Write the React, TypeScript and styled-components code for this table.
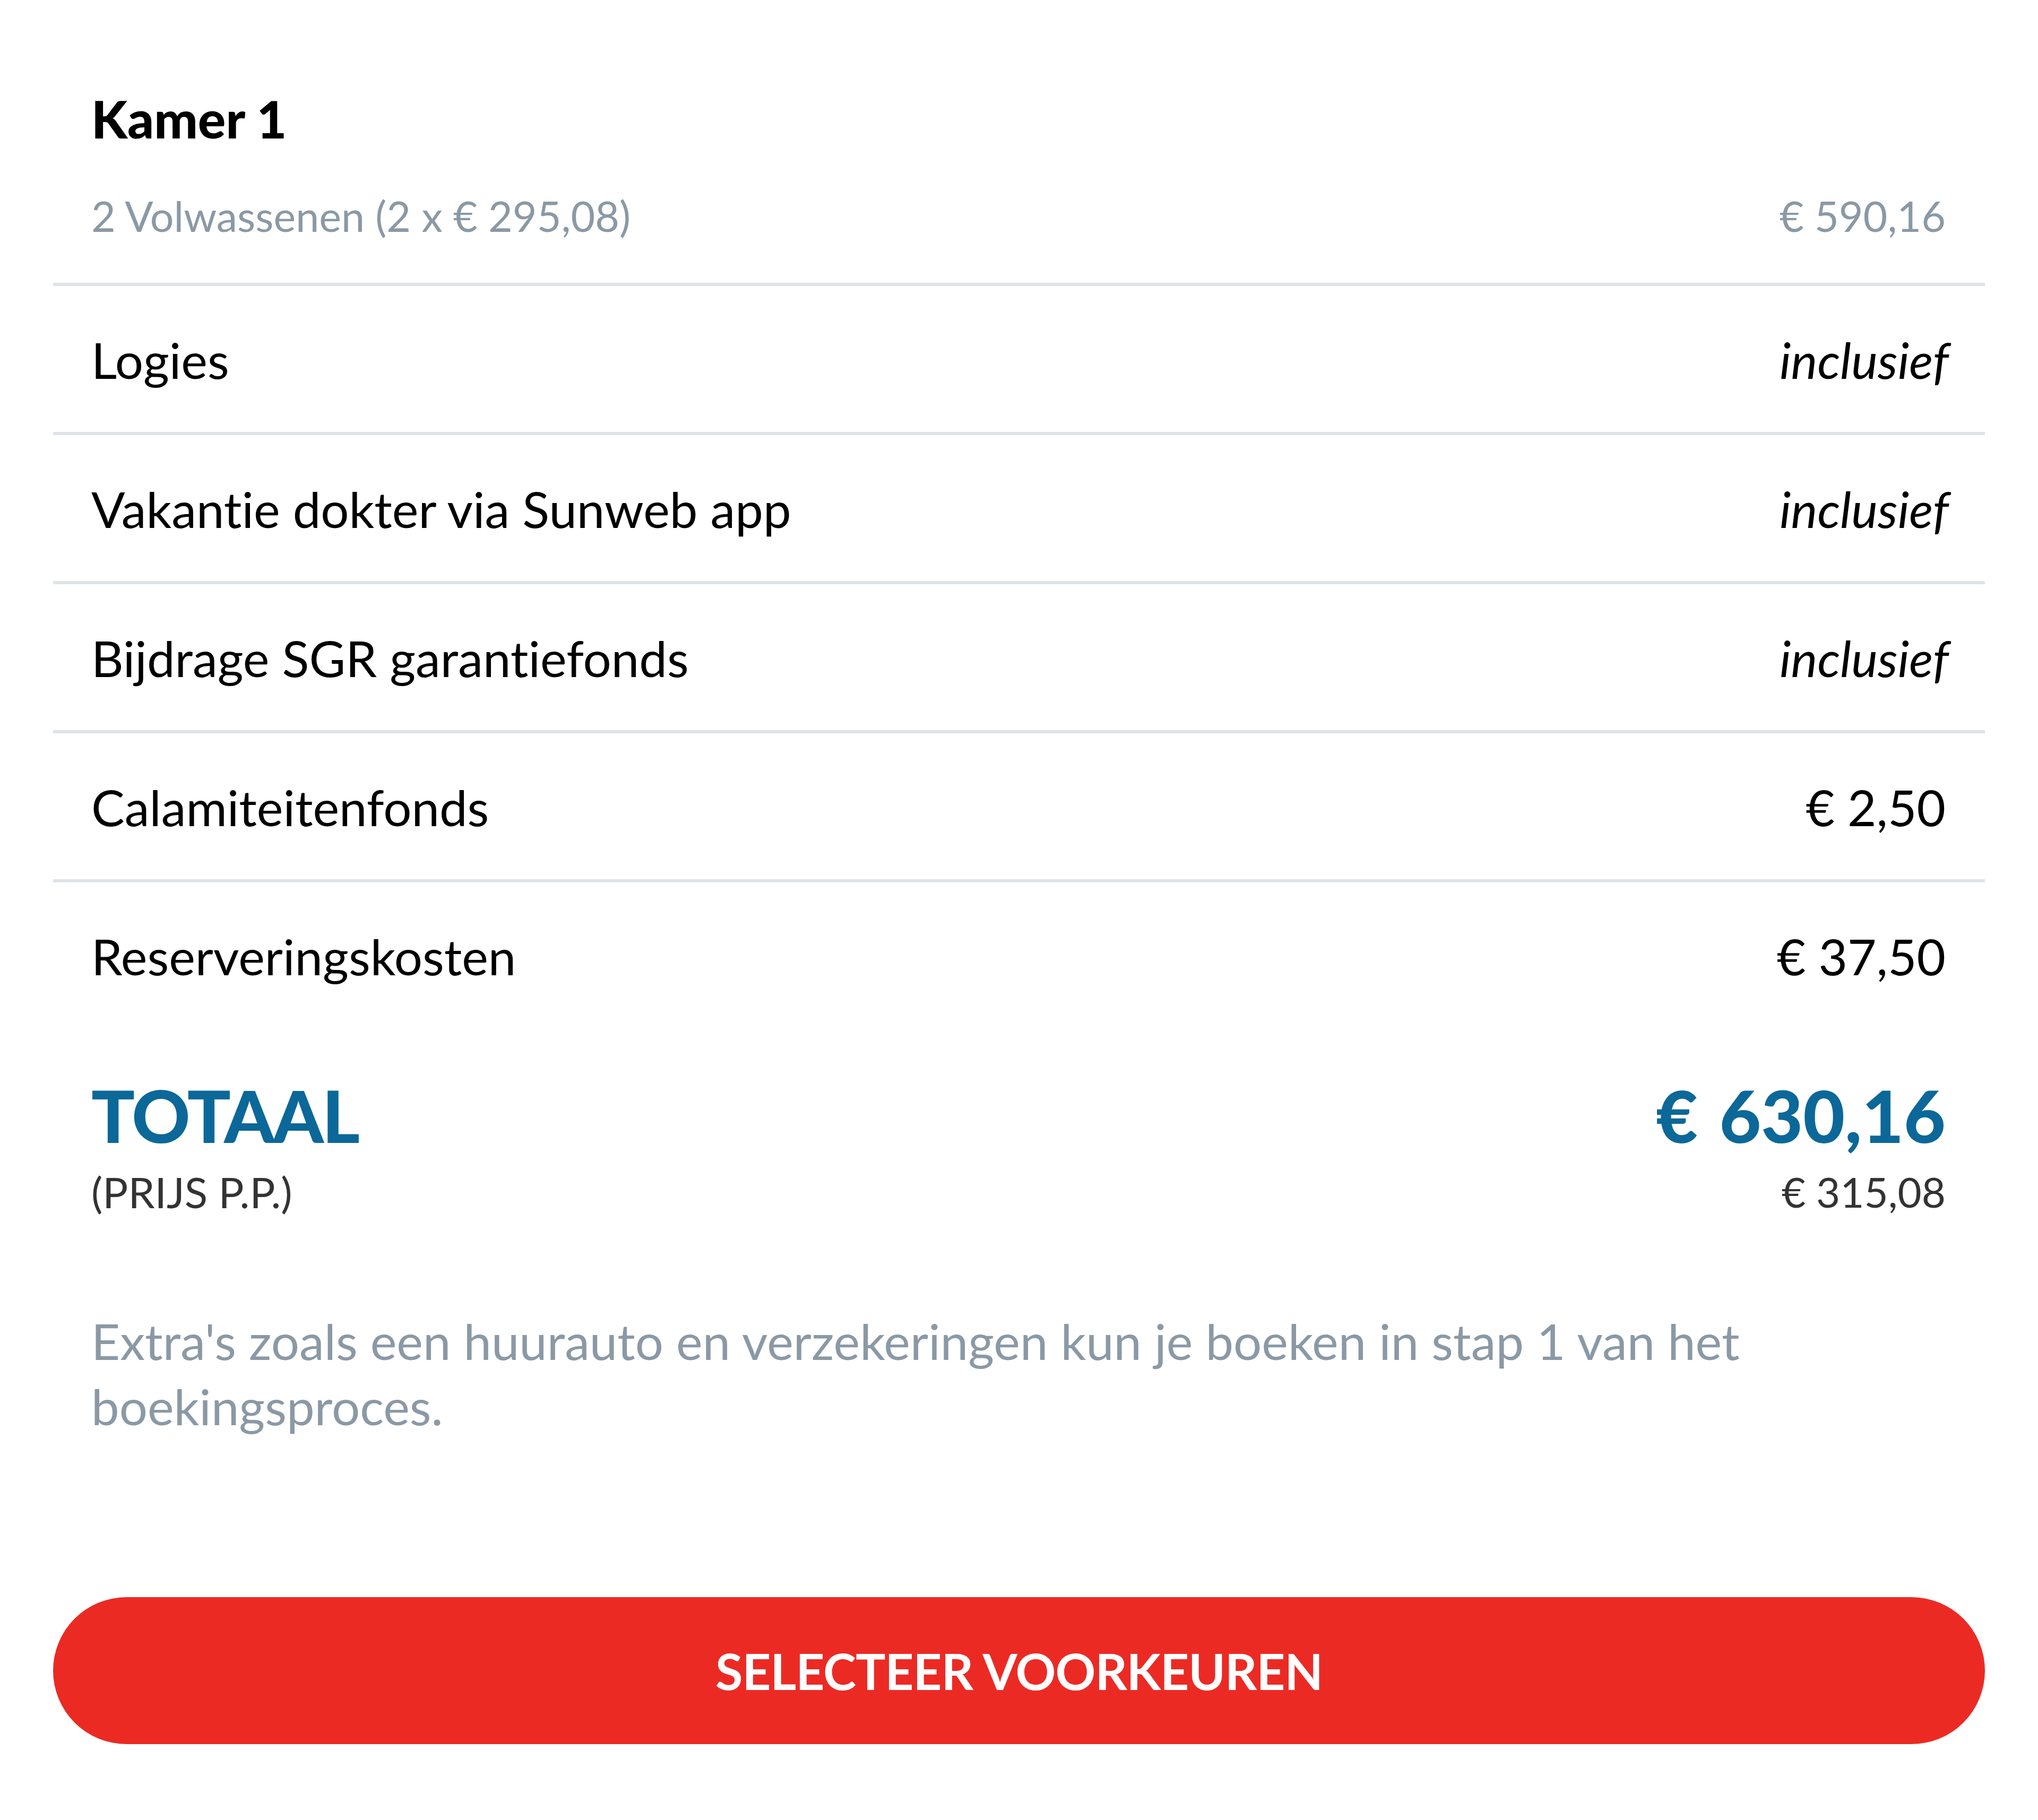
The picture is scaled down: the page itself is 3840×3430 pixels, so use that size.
import React from "react";
import styled, { createGlobalStyle } from "styled-components";

const GlobalStyle = createGlobalStyle`
  html, body {
    margin: 0;
    padding: 0;
    background: #ffffff;
  }
  body {
    font-family: "Lato", "Noto Sans", sans-serif;
    font-variant-ligatures: none;
    color: #000000;
  }
  * { box-sizing: border-box; }
`;

const Panel = styled.div`
  width: 3840px;
  min-height: 3430px;
  padding: 162px 100px 148px;
  display: flex;
  flex-direction: column;
`;

const Header = styled.div`
  display: flex;
  flex-direction: column;
  gap: 69px;
  padding: 0 74px 72px 72px;
`;

const Title = styled.h2`
  margin: 0;
  font-size: 98px;
  line-height: 122px;
  font-weight: 900;
  color: #000;
`;

const SubRow = styled.div`
  display: flex;
  justify-content: space-between;
  align-items: baseline;
  font-size: 79px;
  line-height: 108px;
  color: #8a99a5;
`;

const List = styled.div`
  display: flex;
  flex-direction: column;
`;

const Row = styled.div`
  display: flex;
  justify-content: space-between;
  align-items: baseline;
  border-top: 6px solid #dde3e7;
  padding: 78px 74px 75px 72px;
  font-size: 94px;
  line-height: 122px;
`;

const Value = styled.span<{ $italic?: boolean }>`
  font-style: ${(p) => (p.$italic ? "italic" : "normal")};
  margin-right: ${(p) => (p.$italic ? "-6px" : "0")};
`;

const Totals = styled.div`
  display: grid;
  grid-template-columns: 1fr auto;
  row-gap: 19px;
  padding: 89px 74px 0 72px;
`;

const TotalLabel = styled.div`
  font-size: 136px;
  line-height: 150px;
  font-weight: 900;
  color: #0b6898;
  letter-spacing: -3px;
`;

const TotalAmount = styled(TotalLabel)`
  text-align: right;
  letter-spacing: 0;
  word-spacing: 8px;
`;

const SmallNote = styled.div<{ $right?: boolean }>`
  font-size: ${(p) => (p.$right ? "78px" : "80px")};
  line-height: 100px;
  color: #333;
  text-align: ${(p) => (p.$right ? "right" : "left")};
`;

const Info = styled.p`
  margin: 169px 0 0;
  padding: 0 74px 0 72px;
  max-width: 3440px;
  font-size: 94px;
  line-height: 123px;
  color: #8a99a5;
`;

const CTA = styled.button`
  margin-top: 299px;
  width: 100%;
  height: 277px;
  border: none;
  border-radius: 139px;
  background: #ec2a24;
  color: #ffffff;
  font-family: "Lato", "Noto Sans", sans-serif;
  font-size: 94px;
  font-weight: 700;
  letter-spacing: -1px;
  cursor: pointer;
`;

const rows: { label: string; value: string; italic?: boolean }[] = [
  { label: "Logies", value: "inclusief", italic: true },
  { label: "Vakantie dokter via Sunweb app", value: "inclusief", italic: true },
  { label: "Bijdrage SGR garantiefonds", value: "inclusief", italic: true },
  { label: "Calamiteitenfonds", value: "€ 2,50" },
  { label: "Reserveringskosten", value: "€ 37,50" },
];

export default function App() {
  return (
    <>
      <GlobalStyle />
      <Panel>
        <Header>
          <Title>Kamer 1</Title>
          <SubRow>
            <span>2 Volwassenen (2 x € 295,08)</span>
            <span>€ 590,16</span>
          </SubRow>
        </Header>
        <List>
          {rows.map((r) => (
            <Row key={r.label}>
              <span>{r.label}</span>
              <Value $italic={r.italic}>{r.value}</Value>
            </Row>
          ))}
        </List>
        <Totals>
          <TotalLabel>TOTAAL</TotalLabel>
          <TotalAmount>€ 630,16</TotalAmount>
          <SmallNote>(PRIJS P.P.)</SmallNote>
          <SmallNote $right>€ 315,08</SmallNote>
        </Totals>
        <Info>
          Extra's zoals een huurauto en verzekeringen kun je boeken in stap 1 van het boekingsproces.
        </Info>
        <CTA>SELECTEER VOORKEUREN</CTA>
      </Panel>
    </>
  );
}
